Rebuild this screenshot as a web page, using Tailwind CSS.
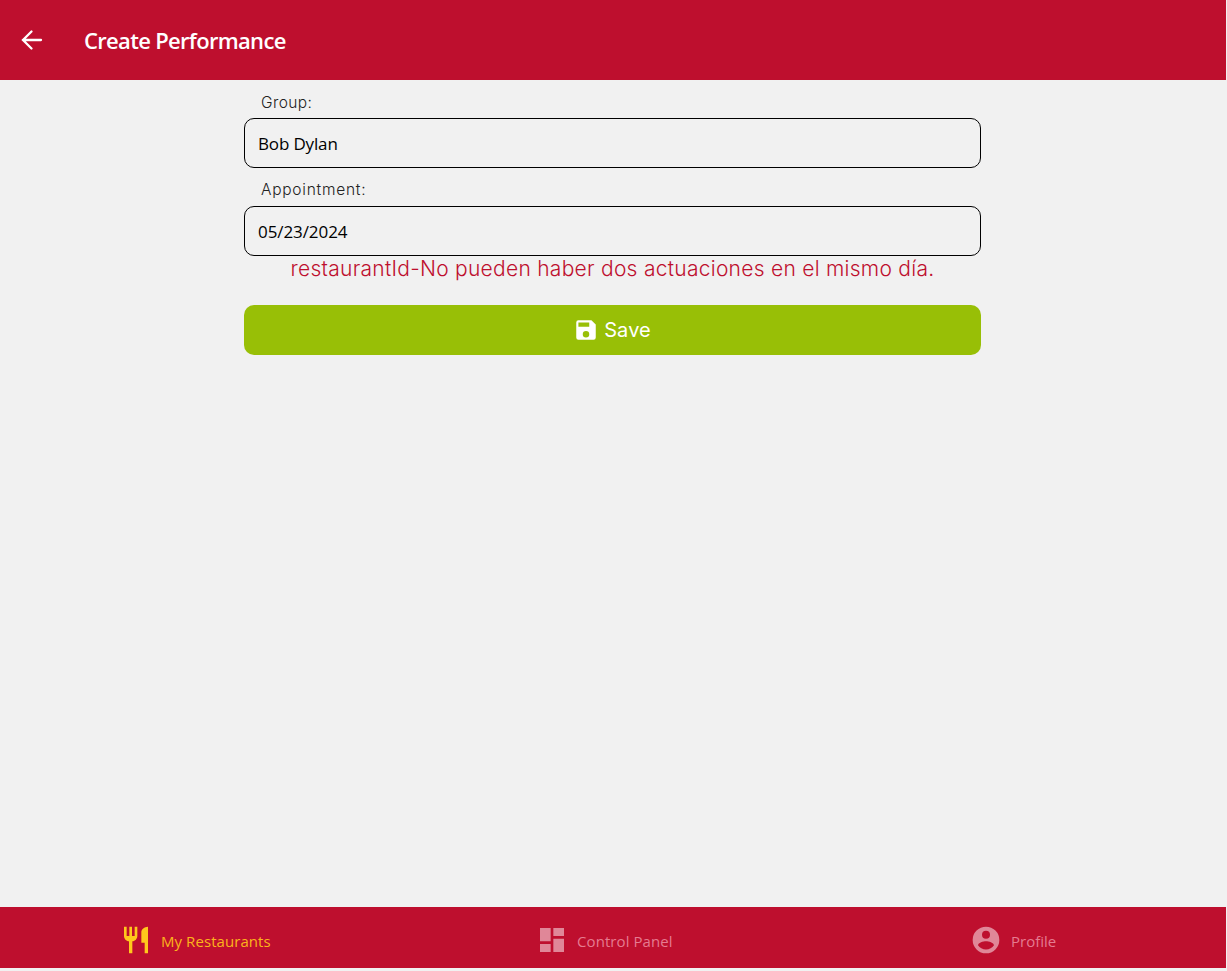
<!DOCTYPE html>
<html lang="en">
<head>
<meta charset="utf-8">
<title>Create Performance</title>
<script src="https://cdn.jsdelivr.net/npm/@tailwindcss/browser@4"></script>
</head>
<body class="h-[971px] overflow-hidden bg-[#f1f1f1] pr-px font-['Open_Sans',sans-serif]">
<div class="flex h-[968px] flex-col">
  <header class="flex h-20 shrink-0 items-center bg-[#be0f2e] pl-5 text-white">
    <svg class="size-6" viewBox="0 0 24 24" fill="none" stroke="currentColor" stroke-width="2.300" stroke-linecap="round"><path d="M11.500 3.500 3 12l8.500 8.500M3 12h18"/></svg>
    <h1 class="ml-10 text-[22px] font-semibold tracking-[-0.680px] whitespace-nowrap"><span>Create Performance</span></h1>
  </header>
  <main class="ml-[244px] flex w-[737px] grow flex-col">
    <label class="mt-[13px] h-[25px] pl-[17px] font-[Inter,sans-serif] text-[15.500px] leading-5 font-light tracking-[0.400px] text-[#222]"><span>Group:</span></label>
    <div class="flex h-[50px] items-center rounded-[10px] border border-black px-[13px] pt-px text-[17px] tracking-[-0.150px] text-black"><span>Bob Dylan</span></div>
    <label class="mt-3 h-[26px] pl-[17px] font-[Inter,sans-serif] text-[15.500px] leading-5 font-light tracking-[0.750px] text-[#222]"><span>Appointment:</span></label>
    <div class="flex h-[50px] items-center rounded-[10px] border border-black px-[13px] pt-px text-[17px] tracking-[-0.080px] text-black"><span>05/23/2024</span></div>
    <p class="h-[49px] text-center font-[Inter,sans-serif] text-[21px] leading-[25px] font-light tracking-[0.270px] whitespace-nowrap text-[#be0f2e]"><span>restaurantId-No pueden haber dos actuaciones en el mismo día.</span></p>
    <button class="flex h-[50px] items-center justify-center gap-[5px] rounded-[10px] bg-[#98bf06] pr-px pb-px font-[Inter,sans-serif] text-[20px] tracking-[0.100px] text-white">
      <svg class="size-[26px]" viewBox="0 0 24 24" fill="currentColor"><path d="M15 9H5V5h10M12 19a3 3 0 0 1-3-3 3 3 0 0 1 3-3 3 3 0 0 1 3 3 3 3 0 0 1-3 3M17 3H5a2 2 0 0 0-2 2v14a2 2 0 0 0 2 2h14a2 2 0 0 0 2-2V7l-4-4Z"/></svg>
      <span>Save</span>
    </button>
  </main>
  <nav class="flex h-[61px] shrink-0 bg-[#be0f2e] pt-[17px] text-[15px]">
    <a class="flex w-[409px] gap-[9px] pl-[120px] text-[#fbb41b]">
      <svg class="size-8" viewBox="0 0 24 24" fill="#ffc81c"><path d="M11 9H9V2H7v7H5V2H3v7c0 2.120 1.660 3.840 3.750 3.970V22h2.500v-9.030C11.340 12.840 13 11.120 13 9V2h-2v7m5-3v8h2.500v8H21V2c-2.760 0-5 2.240-5 4Z"/></svg>
      <span class="leading-[34px] tracking-[0.070px]">My Restaurants</span>
    </a>
    <a class="flex w-[409px] gap-[9px] pl-[127px] text-[#e57b90]">
      <svg class="size-8" viewBox="0 0 24 24" fill="#e08798"><path d="M13 3v6h8V3m-8 18h8V11h-8M3 21h8v-6H3m0-2h8V3H3v10Z"/></svg>
      <span class="leading-[34px] tracking-[0.080px]">Control Panel</span>
    </a>
    <a class="flex w-[408px] gap-[9px] pl-[152px] text-[#e57b90]">
      <svg class="size-8" viewBox="0 0 24 24" fill="#e08798"><path d="M12 19.200c-2.500 0-4.710-1.280-6-3.200.03-2 4-3.100 6-3.100s5.970 1.100 6 3.100c-1.290 1.920-3.500 3.200-6 3.200M12 5a3 3 0 1 1 0 6 3 3 0 0 1 0-6m0-3a10 10 0 1 0 0 20 10 10 0 0 0 0-20Z"/></svg>
      <span class="leading-[34px]">Profile</span>
    </a>
  </nav>
</div>
</body>
</html>
